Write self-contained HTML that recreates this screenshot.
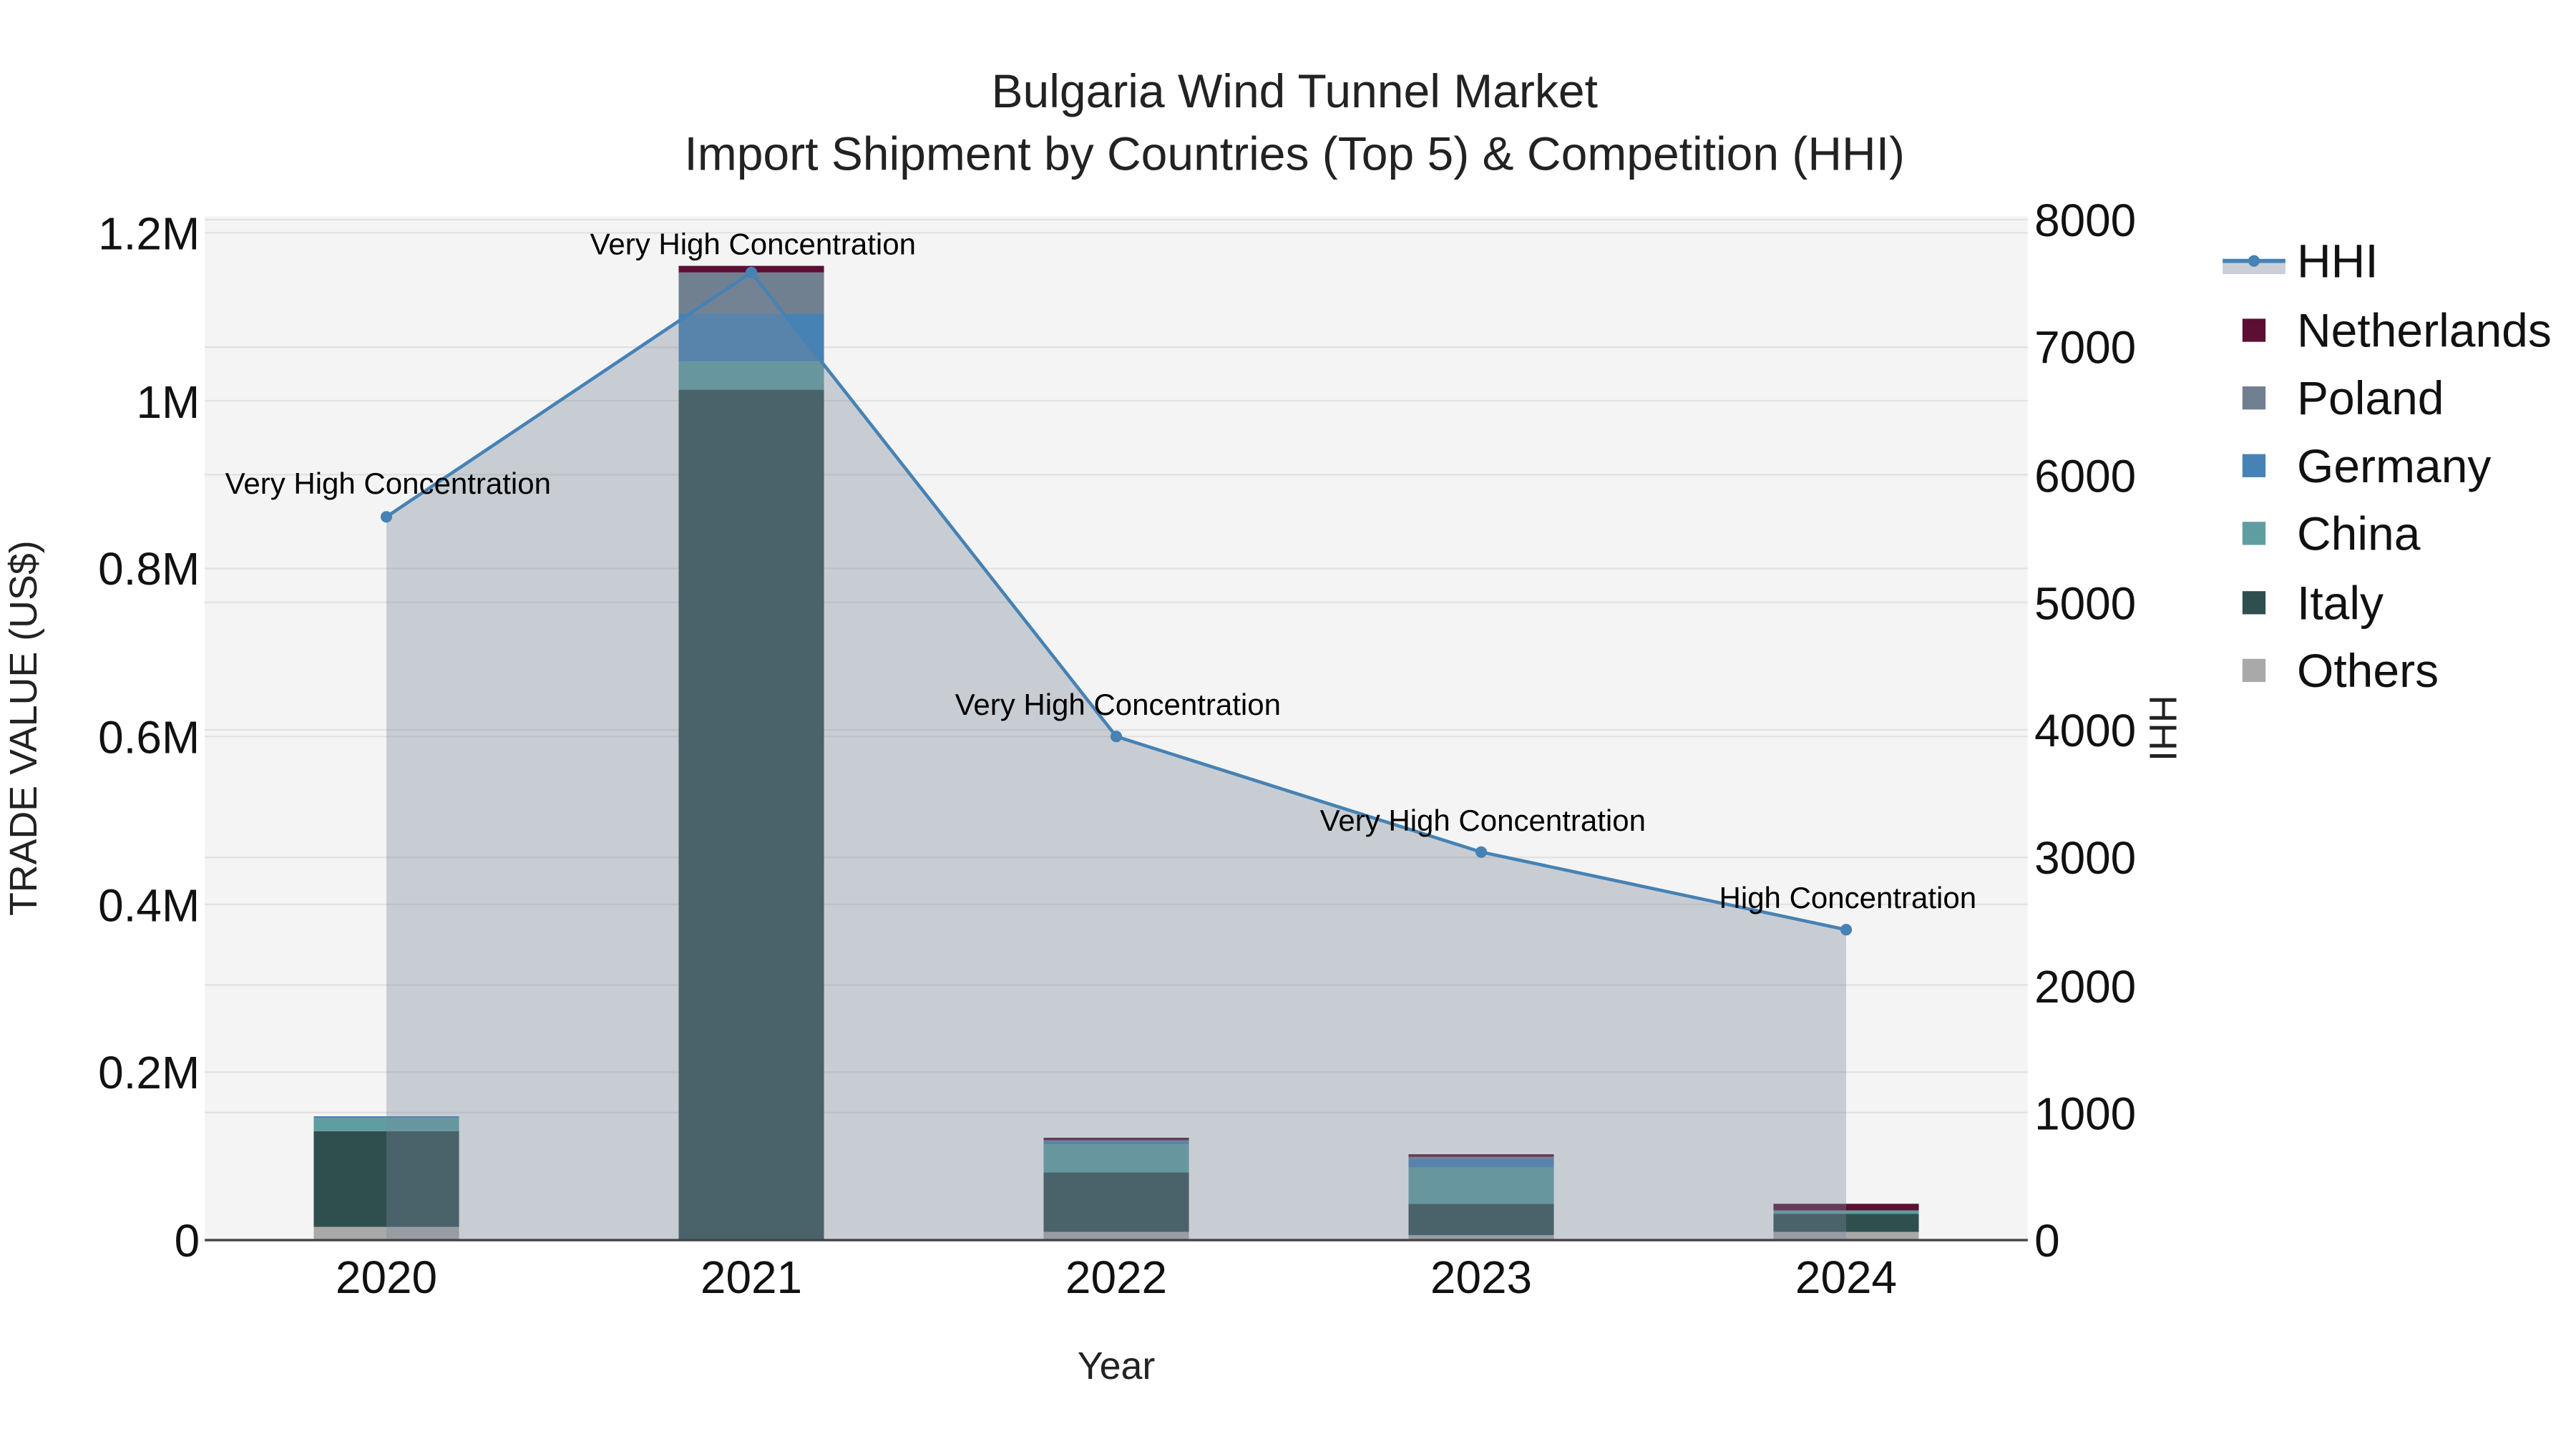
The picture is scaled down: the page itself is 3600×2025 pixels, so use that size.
<!DOCTYPE html>
<html><head><style>html,body{margin:0;padding:0;background:#fff}svg{display:block}</style></head>
<body>
<svg width="3600" height="2025" viewBox="0 0 1560 877.5" xmlns="http://www.w3.org/2000/svg" font-family="Liberation Sans, sans-serif">
<rect x="0" y="0" width="1560" height="877.5" fill="#fff"/>
<rect x="124" y="131" width="1104" height="620" fill="#f4f4f4"/>
<g stroke="#e2e2e2" stroke-width="1">
<line x1="124" x2="1228" y1="649.3" y2="649.3"/><line x1="124" x2="1228" y1="547.7" y2="547.7"/>
<line x1="124" x2="1228" y1="446" y2="446"/><line x1="124" x2="1228" y1="344.3" y2="344.3"/>
<line x1="124" x2="1228" y1="242.7" y2="242.7"/><line x1="124" x2="1228" y1="141" y2="141"/>
<line x1="124" x2="1228" y1="673.75" y2="673.75"/><line x1="124" x2="1228" y1="596.5" y2="596.5"/>
<line x1="124" x2="1228" y1="519.25" y2="519.25"/><line x1="124" x2="1228" y1="442" y2="442"/>
<line x1="124" x2="1228" y1="364.75" y2="364.75"/><line x1="124" x2="1228" y1="287.5" y2="287.5"/>
<line x1="124" x2="1228" y1="210.25" y2="210.25"/><line x1="124" x2="1228" y1="133" y2="133"/>
</g>
<g>
<rect x="190" y="743" width="88" height="8" fill="#a9a9a9"/>
<rect x="190" y="685" width="88" height="58" fill="#2f4f4f"/>
<rect x="190" y="677" width="88" height="8" fill="#5f9ea0"/>
<rect x="190" y="676" width="88" height="1" fill="#4682b4"/>

<rect x="411" y="236" width="88" height="515" fill="#2f4f4f"/>
<rect x="411" y="219" width="88" height="17" fill="#5f9ea0"/>
<rect x="411" y="190" width="88" height="29" fill="#4682b4"/>
<rect x="411" y="165" width="88" height="25" fill="#708090"/>
<rect x="411" y="161" width="88" height="4" fill="#5c0f33"/>

<rect x="632" y="746" width="88" height="5" fill="#a9a9a9"/>
<rect x="632" y="710" width="88" height="36" fill="#2f4f4f"/>
<rect x="632" y="693" width="88" height="17" fill="#5f9ea0"/>
<rect x="632" y="691" width="88" height="2" fill="#4682b4"/>
<rect x="632" y="690" width="88" height="1" fill="#708090"/>
<rect x="632" y="689" width="88" height="1.5" fill="#5c0f33"/>

<rect x="853" y="748" width="88" height="3" fill="#a9a9a9"/>
<rect x="853" y="729" width="88" height="19" fill="#2f4f4f"/>
<rect x="853" y="707" width="88" height="22" fill="#5f9ea0"/>
<rect x="853" y="702" width="88" height="5" fill="#4682b4"/>
<rect x="853" y="700" width="88" height="2" fill="#708090"/>
<rect x="853" y="699" width="88" height="1.5" fill="#5c0f33"/>

<rect x="1074" y="746" width="88" height="5" fill="#a9a9a9"/>
<rect x="1074" y="735" width="88" height="11" fill="#2f4f4f"/>
<rect x="1074" y="733" width="88" height="2" fill="#5f9ea0"/>
<rect x="1074" y="729" width="88" height="4" fill="#5c0f33"/>
</g>
<polygon points="234,751 234,313 455,165 676,446 897,516 1118,563 1118,751" fill="rgba(122,136,155,0.36)"/>
<line x1="124" x2="1228" y1="751" y2="751" stroke="#444" stroke-width="1.5"/>
<polyline points="234,313 455,165 676,446 897,516 1118,563" fill="none" stroke="#4682b4" stroke-width="2"/>
<g fill="#4682b4"><circle cx="234" cy="313" r="3.5"/><circle cx="455" cy="165" r="3.5"/><circle cx="676" cy="446" r="3.5"/><circle cx="897" cy="516" r="3.5"/><circle cx="1118" cy="563" r="3.5"/></g>
<g font-size="18.2" text-anchor="middle" fill="#000">
<text x="235" y="299">Very High Concentration</text>
<text x="456" y="154">Very High Concentration</text>
<text x="677" y="433">Very High Concentration</text>
<text x="898" y="503">Very High Concentration</text>
<text x="1119" y="550">High Concentration</text>
</g>
<g font-size="28.6" text-anchor="middle" fill="#222">
<text x="784" y="65">Bulgaria Wind Tunnel Market</text>
<text x="784" y="103">Import Shipment by Countries (Top 5) &amp; Competition (HHI)</text>
</g>
<g font-size="27.7" text-anchor="end" fill="#111">
<text x="121" y="761">0</text><text x="121" y="659">0.2M</text><text x="121" y="558">0.4M</text>
<text x="121" y="456">0.6M</text><text x="121" y="354">0.8M</text><text x="121" y="253">1M</text><text x="121" y="151">1.2M</text>
</g>
<g font-size="27.7" text-anchor="start" fill="#111">
<text x="1232" y="761">0</text><text x="1232" y="684">1000</text><text x="1232" y="607">2000</text>
<text x="1232" y="529">3000</text><text x="1232" y="452">4000</text><text x="1232" y="375">5000</text>
<text x="1232" y="298">6000</text><text x="1232" y="220">7000</text><text x="1232" y="143">8000</text>
</g>
<g font-size="27.7" text-anchor="middle" fill="#111">
<text x="234" y="783">2020</text><text x="455" y="783">2021</text><text x="676" y="783">2022</text><text x="897" y="783">2023</text><text x="1118" y="783">2024</text>
</g>
<text x="676" y="835" font-size="23.3" text-anchor="middle" fill="#222">Year</text>
<text transform="translate(22,441) rotate(-90)" font-size="23.3" text-anchor="middle" fill="#222">TRADE VALUE (US$)</text>
<text transform="translate(1302,441) rotate(90)" font-size="23.3" text-anchor="middle" fill="#222">HHI</text>
<g font-size="28.6" fill="#111">
<rect x="1346" y="158" width="38" height="8" fill="rgba(122,136,155,0.4)"/>
<line x1="1346" x2="1384" y1="158" y2="158" stroke="#4682b4" stroke-width="2.5"/>
<circle cx="1365" cy="158" r="3.5" fill="#4682b4"/>
<text x="1391" y="168">HHI</text>
<rect x="1358" y="193" width="14" height="14" fill="#5c0f33"/><text x="1391" y="210">Netherlands</text>
<rect x="1358" y="234" width="14" height="14" fill="#708090"/><text x="1391" y="251">Poland</text>
<rect x="1358" y="275" width="14" height="14" fill="#4682b4"/><text x="1391" y="292">Germany</text>
<rect x="1358" y="316" width="14" height="14" fill="#5f9ea0"/><text x="1391" y="333">China</text>
<rect x="1358" y="358" width="14" height="14" fill="#2f4f4f"/><text x="1391" y="375">Italy</text>
<rect x="1358" y="399" width="14" height="14" fill="#a9a9a9"/><text x="1391" y="416">Others</text>
</g>
</svg>
</body></html>
